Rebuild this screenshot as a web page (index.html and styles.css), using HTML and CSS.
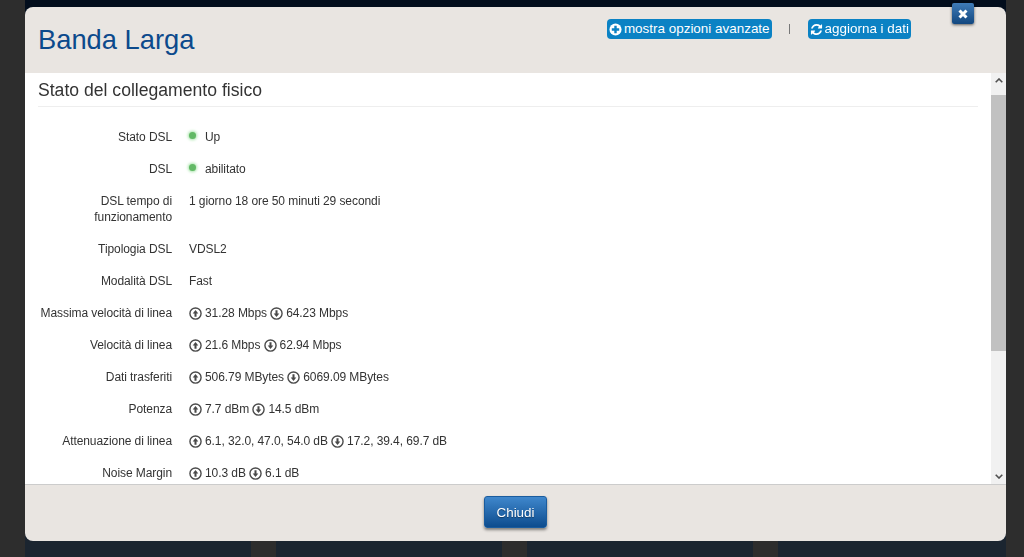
FILE: index.html
```html
<!DOCTYPE html>
<html lang="it">
  <head>
    <meta charset="UTF-8" />
    <meta name="viewport" content="width=device-width, initial-scale=1.0" />
    <title>Banda Larga</title>
    <link rel="stylesheet" href="styles.css">
  </head>
  <body>
    <svg class="icon-defs" width="0" height="0" aria-hidden="true">
      <symbol id="icon-up" viewBox="0 0 14 14">
        <circle cx="7" cy="7" r="6" fill="none" stroke="currentColor" stroke-width="1.5" />
        <path d="M7 3.2 10 7H8.1v3.4H5.9V7H4z" fill="currentColor" />
      </symbol>
      <symbol id="icon-down" viewBox="0 0 14 14">
        <circle cx="7" cy="7" r="6" fill="none" stroke="currentColor" stroke-width="1.5" />
        <path d="M7 10.8 4 7h1.9V3.6h2.2V7H10z" fill="currentColor" />
      </symbol>
    </svg>

    <!-- page behind the dialog -->
    <div class="backdrop">
      <div class="backdrop-top"></div>
      <div class="backdrop-columns">
        <div class="backdrop-col"></div>
        <div class="backdrop-col"></div>
        <div class="backdrop-col"></div>
        <div class="backdrop-col"></div>
      </div>
    </div>

    <div class="modal">
      <button class="modal-close" aria-label="Chiudi">
        <svg width="12" height="12" viewBox="0 0 12 12">
          <path d="M2.5 2.5l7 7M9.5 2.5l-7 7" fill="none" stroke="#fff" stroke-width="3" />
        </svg>
      </button>

      <div class="modal-header">
        <h1 class="modal-title">Banda Larga</h1>
        <div class="header-actions">
          <a class="action-link">
            <svg class="action-icon" viewBox="0 0 14 14">
              <circle cx="7" cy="7" r="6.5" fill="#fff" />
              <path d="M5.7 3h2.6v2.7H11v2.6H8.3V11H5.7V8.3H3V5.7h2.7z" fill="#0b82c4" />
            </svg>
            mostra opzioni avanzate
          </a>
          <span class="action-sep"></span>
          <a class="action-link">
            <svg class="action-icon" viewBox="0 0 1792 1792">
              <path fill="#fff" d="M1639 1056q0 5-1 7-64 268-268 434.5t-478 166.5q-146 0-282.5-55t-243.5-157l-129 129q-19 19-45 19t-45-19-19-45v-448q0-26 19-45t45-19h448q26 0 45 19t19 45-19 45l-137 137q71 66 161 102t187 36q134 0 250-65t186-179q11-17 53-117 8-23 30-23h192q13 0 22.5 9.5t9.5 22.5zm25-800v448q0 26-19 45t-45 19h-448q-26 0-45-19t-19-45 19-45l138-138q-148-137-349-137-134 0-250 65t-186 179q-11 17-53 117-8 23-30 23h-199q-13 0-22.5-9.5t-9.5-22.5v-7q65-268 270-434.5t480-166.5q146 0 284 55.5t245 156.5l130-129q19-19 45-19t45 19 19 45z" />
            </svg>
            aggiorna i dati
          </a>
        </div>
      </div>

      <div class="modal-body">
        <div class="modal-content">
          <h2 class="section-title">Stato del collegamento fisico</h2>

          <div class="row">
            <div class="row-label">Stato DSL</div>
            <div class="row-value"><span class="status-dot"></span>Up</div>
          </div>
          <div class="row">
            <div class="row-label">DSL</div>
            <div class="row-value"><span class="status-dot"></span>abilitato</div>
          </div>
          <div class="row">
            <div class="row-label">DSL tempo di funzionamento</div>
            <div class="row-value">1 giorno 18 ore 50 minuti 29 secondi</div>
          </div>
          <div class="row">
            <div class="row-label">Tipologia DSL</div>
            <div class="row-value">VDSL2</div>
          </div>
          <div class="row">
            <div class="row-label">Modalità DSL</div>
            <div class="row-value">Fast</div>
          </div>
          <div class="row">
            <div class="row-label">Massima velocità di linea</div>
            <div class="row-value">
              <svg class="dir-icon"><use href="#icon-up" /></svg>31.28 Mbps
              <svg class="dir-icon"><use href="#icon-down" /></svg>64.23 Mbps
            </div>
          </div>
          <div class="row">
            <div class="row-label">Velocità di linea</div>
            <div class="row-value">
              <svg class="dir-icon"><use href="#icon-up" /></svg>21.6 Mbps
              <svg class="dir-icon"><use href="#icon-down" /></svg>62.94 Mbps
            </div>
          </div>
          <div class="row">
            <div class="row-label">Dati trasferiti</div>
            <div class="row-value">
              <svg class="dir-icon"><use href="#icon-up" /></svg>506.79 MBytes
              <svg class="dir-icon"><use href="#icon-down" /></svg>6069.09 MBytes
            </div>
          </div>
          <div class="row">
            <div class="row-label">Potenza</div>
            <div class="row-value">
              <svg class="dir-icon"><use href="#icon-up" /></svg>7.7 dBm
              <svg class="dir-icon"><use href="#icon-down" /></svg>14.5 dBm
            </div>
          </div>
          <div class="row">
            <div class="row-label">Attenuazione di linea</div>
            <div class="row-value">
              <svg class="dir-icon"><use href="#icon-up" /></svg>6.1, 32.0, 47.0, 54.0 dB
              <svg class="dir-icon"><use href="#icon-down" /></svg>17.2, 39.4, 69.7 dB
            </div>
          </div>
          <div class="row">
            <div class="row-label">Noise Margin</div>
            <div class="row-value">
              <svg class="dir-icon"><use href="#icon-up" /></svg>10.3 dB
              <svg class="dir-icon"><use href="#icon-down" /></svg>6.1 dB
            </div>
          </div>
        </div>

        <div class="scrollbar">
          <div class="scroll-arrow">
            <svg width="8" height="5" viewBox="0 0 8 5"><path d="M.7 4.3 4 1l3.3 3.3" fill="none" stroke="#505050" stroke-width="1.6" /></svg>
          </div>
          <div class="scroll-track">
            <div class="scroll-thumb"></div>
          </div>
          <div class="scroll-arrow">
            <svg width="8" height="5" viewBox="0 0 8 5"><path d="M.7.7 4 4 7.3.7" fill="none" stroke="#505050" stroke-width="1.6" /></svg>
          </div>
        </div>
      </div>

      <div class="modal-footer">
        <button class="btn-close">Chiudi</button>
      </div>
    </div>
  </body>
</html>
```

FILE: styles.css
```css
* {
  margin: 0;
  padding: 0;
  box-sizing: border-box;
}

html,
body {
  height: 100%;
  overflow: hidden;
}

body {
  font-family: "Liberation Sans", Arial, sans-serif;
  font-size: 12px;
  letter-spacing: -0.08px;
  line-height: 16px;
  color: #333;
  background: #2d2d2d;
}

.icon-defs {
  position: absolute;
}

.backdrop {
  height: 100%;
  padding: 0 18px 0 25px;
  display: flex;
  flex-direction: column;
}

.backdrop-top {
  height: 30px;
  background: #020d1c;
}

.backdrop-columns {
  flex: 1;
  display: grid;
  grid-template-columns: repeat(3, 226px) 1fr;
  gap: 25px;
}

.backdrop-col {
  background: #1b2530;
}

.modal {
  position: fixed;
  left: 25px;
  top: 7px;
  width: 981px;
  height: 534px;
  display: flex;
  flex-direction: column;
  background: #e9e5e1;
  border-radius: 8px;
}

.modal-close {
  position: absolute;
  top: -4px;
  right: 32px;
  width: 22px;
  height: 21px;
  display: flex;
  align-items: center;
  justify-content: center;
  border: none;
  border-radius: 2px;
  background: linear-gradient(#3f7cb8, #12477f);
  box-shadow: 0 1px 3px rgba(0, 0, 0, 0.6);
}

.modal-header {
  height: 66px;
  flex-shrink: 0;
  display: flex;
  justify-content: space-between;
  padding: 0 95px 0 13px;
}

.modal-title {
  margin-top: 16px;
  font-size: 27.3px;
  letter-spacing: 0;
  line-height: 34px;
  font-weight: 400;
  color: #0c4a8c;
}

.header-actions {
  margin-top: 12px;
  height: 20px;
  display: flex;
  align-items: center;
}

.action-link {
  height: 20px;
  display: flex;
  align-items: center;
  gap: 2px;
  padding: 0 2px;
  border-radius: 4px;
  background: #0b82c4;
  color: #fff;
  font-size: 13.45px;
  letter-spacing: 0;
  white-space: nowrap;
}

.action-icon {
  width: 13px;
  height: 13px;
}

.action-sep {
  width: 1px;
  height: 10px;
  margin: 0 18px 0 17px;
  background: #777;
}

.modal-body {
  flex: 1;
  min-height: 0;
  display: flex;
  background: #fff;
  border-bottom: 1px solid #ccc;
}

.modal-content {
  flex: 1;
  overflow: hidden;
  padding: 0 13px;
}

.section-title {
  margin: 8px 0 22px;
  padding-bottom: 6px;
  font-size: 17.6px;
  letter-spacing: 0;
  line-height: 19px;
  font-weight: 400;
  border-bottom: 1px solid #eee;
}

.row {
  display: flex;
  gap: 17px;
  margin-bottom: 16px;
}

.row-label {
  width: 134px;
  flex-shrink: 0;
  text-align: right;
}

.row-value {
  white-space: nowrap;
}

.status-dot {
  display: inline-block;
  width: 7px;
  height: 7px;
  margin: 0 9px 5px 0;
  border-radius: 50%;
  background: #62b965;
  box-shadow: 0 0 3px 1px #a5e4a7;
  vertical-align: middle;
}

.dir-icon {
  width: 13px;
  height: 13px;
  margin-right: 3px;
  vertical-align: -3px;
  color: #4a4a4a;
}

.scrollbar {
  width: 15px;
  flex-shrink: 0;
  display: flex;
  flex-direction: column;
  background: #f1f1f1;
}

.scroll-arrow {
  height: 15px;
  display: flex;
  align-items: center;
  justify-content: center;
}

.scroll-track {
  flex: 1;
  padding-top: 7px;
}

.scroll-thumb {
  height: 256px;
  background: #c1c1c1;
}

.modal-footer {
  flex: none;
  height: 56px;
  display: flex;
  justify-content: center;
  align-items: flex-start;
  padding-top: 11px;
}

.btn-close {
  width: 63px;
  height: 32px;
  border: 1px solid #1a5c9e;
  border-radius: 3px;
  background: linear-gradient(#3f87cc, #0d4c8e);
  box-shadow: 0 2px 3px rgba(0, 0, 0, 0.45);
  color: #fff;
  font-family: "Liberation Sans", Arial, sans-serif;
  font-size: 13.4px;
  text-shadow: 0 1px 1px rgba(0, 0, 0, 0.4);
}
```
